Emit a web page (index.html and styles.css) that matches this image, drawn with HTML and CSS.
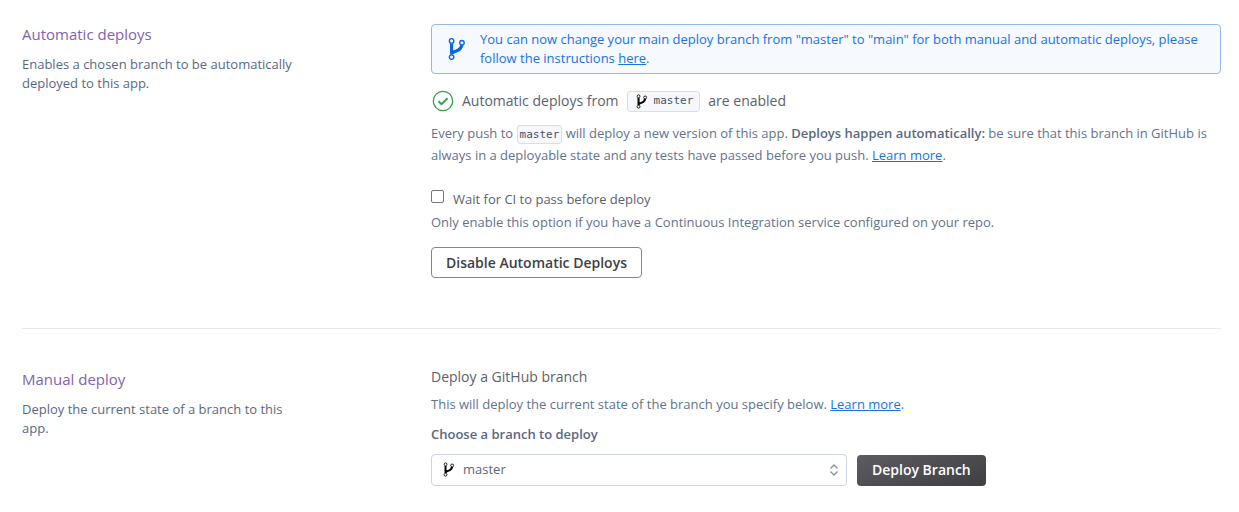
FILE: index.html
```html
<!DOCTYPE html>
<html lang="en">
<head>
<meta charset="utf-8">
<title>Deploy settings</title>
<link rel="stylesheet" href="styles.css">
</head>
<body>
<svg class="sprite" aria-hidden="true">
  <symbol id="branch" viewBox="0 0 20 26">
    <path d="M4 7v12M4.500 18.500C5 14 14.500 17 15.500 8" fill="none" stroke="currentColor" stroke-width="3.500"/>
    <g fill="var(--hole)" stroke="currentColor" stroke-width="1.500">
      <circle cx="4" cy="4" r="2.500"/><circle cx="15.500" cy="6" r="2.500"/><circle cx="4" cy="22" r="2.500"/>
    </g>
  </symbol>
</svg>
<main class="page">
  <section class="section">
    <header class="intro">
      <h2 class="title">Automatic deploys</h2>
      <p class="summary">Enables a chosen branch to be automatically deployed to this app.</p>
    </header>
    <div class="content">
      <div class="notice">
        <svg class="notice-icon" aria-hidden="true"><use href="#branch"/></svg>
        <p class="notice-text">You can now change your main deploy branch from "master" to "main" for both manual and automatic deploys, please follow the instructions <a class="notice-link" href="#instructions">here</a>.</p>
      </div>
      <div class="status">
        <svg class="check" viewBox="0 0 22 22" aria-hidden="true"><circle cx="11" cy="11" r="9.700" fill="none" stroke="currentColor" stroke-width="1.300"/><path d="M6.500 11.200l3 3 6-6" fill="none" stroke="currentColor" stroke-width="2"/></svg>
        <span>Automatic deploys from</span>
        <span class="branch-tag"><svg class="branch-icon" aria-hidden="true"><use href="#branch"/></svg><code class="branch-name">master</code></span>
        <span>are enabled</span>
      </div>
      <p class="description">Every push to <code class="code">master</code> will deploy a new version of this app. <strong>Deploys happen automatically:</strong> be sure that this branch in GitHub is always in a deployable state and any tests have passed before you push. <a class="link" href="#learn-automatic">Learn more</a>.</p>
      <div class="option">
        <input class="checkbox" type="checkbox" id="wait-ci">
        <label for="wait-ci">Wait for CI to pass before deploy</label>
      </div>
      <p class="hint">Only enable this option if you have a Continuous Integration service configured on your repo.</p>
      <button class="button button-outline" type="button">Disable Automatic Deploys</button>
    </div>
  </section>
  <section class="section section-manual">
    <header class="intro">
      <h2 class="title">Manual deploy</h2>
      <p class="summary">Deploy the current state of a branch to this app.</p>
    </header>
    <div class="content">
      <h3 class="subtitle">Deploy a GitHub branch</h3>
      <p class="hint manual-hint">This will deploy the current state of the branch you specify below. <a class="link" href="#learn-manual">Learn more</a>.</p>
      <label class="field-label" for="branch-select">Choose a branch to deploy</label>
      <div class="deploy-row">
        <div class="select-wrap">
          <select class="select" id="branch-select"><option>master</option></select>
          <svg class="branch-icon select-branch" aria-hidden="true"><use href="#branch"/></svg>
          <svg class="select-arrows" viewBox="0 0 10 12" aria-hidden="true"><path d="M1.500 4.500L5 1l3.500 3.500M1.500 7.500L5 11l3.500-3.500" fill="none" stroke="currentColor" stroke-width="1.300"/></svg>
        </div>
        <button class="button button-primary" type="button">Deploy Branch</button>
      </div>
    </div>
  </section>
</main>
</body>
</html>
```
FILE: styles.css
```css
* { box-sizing: border-box; }
body {
  margin: 0;
  background: #fff;
  color: #62738d;
  font: 13px/19px "Open Sans", "Noto Sans", sans-serif;
}
h2, h3, p { margin: 0; font-weight: 400; }
.sprite { position: absolute; width: 0; height: 0; }
.page { padding: 24px 18px 24px 22px; }
.section {
  display: grid;
  grid-template-columns: 280px minmax(0, 1fr);
  column-gap: 129px;
}
.section-manual {
  margin-top: 50px;
  padding-top: 38px;
  border-top: 1px solid #e6e8ec;
}
.title { color: #8562aa; font-size: 15px; line-height: 20px; }
.summary { margin-top: 11px; color: #596981; }
.section-manual .title { margin-top: 2px; }
.notice {
  display: flex;
  align-items: center;
  gap: 14px;
  padding: 5px 16px;
  border: 1px solid #96b9e4;
  border-radius: 4px;
  background: #f6f9fe;
  color: #1673df;
}
.notice-icon { --hole: #f6f9fe; flex: none; width: 18px; height: 26px; color: #0868e5; }
.notice-link { color: inherit; }
.status {
  display: flex;
  align-items: center;
  gap: 8px;
  margin-top: 16px;
  color: #5c616c;
  font-size: 14px;
  line-height: 20px;
}
.check { width: 22px; height: 22px; margin-left: 1px; color: #35a047; }
.branch-tag {
  display: inline-flex;
  align-items: center;
  gap: 6px;
  height: 21px;
  padding: 0 6px 0 8px;
  border: 1px solid #d9dde9;
  border-radius: 3px;
  background: #f7f8fb;
}
.branch-icon { --hole: #fff; flex: none; width: 12px; height: 15px; color: #000; }
.branch-name, .code {
  color: #475268;
  font-family: "DejaVu Sans Mono", monospace;
  font-size: 11px;
  line-height: 16px;
}
.code {
  padding: 2px;
  border: 1px solid #d9dde9;
  border-radius: 3px;
  background: #f7f8fb;
}
.description { margin-top: 10px; line-height: 22px; }
.description strong { color: #596981; font-weight: 600; }
.link { color: #1673df; }
.option {
  display: flex;
  align-items: flex-start;
  gap: 9px;
  margin-top: 24px;
  color: #5c616c;
}
.checkbox {
  appearance: none;
  width: 13px;
  height: 13px;
  margin: 0;
  border: 1px solid #767676;
  border-radius: 2px;
  background: #fff;
}
.checkbox:checked { background: #1673df; }
.hint { margin-top: 4px; }
.button {
  border-radius: 4px;
  padding: 0 15px;
  height: 31px;
  font: 600 14px/20px "Open Sans", "Noto Sans", sans-serif;
}
.button-outline {
  margin-top: 15px;
  padding: 0 14px;
  border: 1px solid #85868b;
  background: #fff;
  color: #3f3f44;
}
.subtitle { color: #5c616c; font-size: 14px; line-height: 19px; }
.manual-hint { margin-top: 9px; }
.field-label { display: block; margin-top: 11px; color: #596981; font-weight: 600; }
.deploy-row { display: flex; align-items: center; gap: 10px; margin-top: 10px; }
.select-wrap { position: relative; flex: 0 1 416px; }
.select {
  display: block;
  appearance: none;
  width: 100%;
  height: 32px;
  padding: 0 28px 2px 31px;
  border: 1px solid #cfd4e5;
  border-radius: 4px;
  background: #fff;
  color: #5d6678;
  font: 13px/19px "Open Sans", "Noto Sans", sans-serif;
}
.select-branch { position: absolute; top: 8px; left: 12px; pointer-events: none; }
.select-arrows { position: absolute; top: 10px; right: 8px; width: 10px; height: 12px; color: #8c8f96; pointer-events: none; }
.button-primary {
  border: 0;
  background: linear-gradient(160deg, #5d5c62, #3f3e43);
  color: #fff;
}
```
